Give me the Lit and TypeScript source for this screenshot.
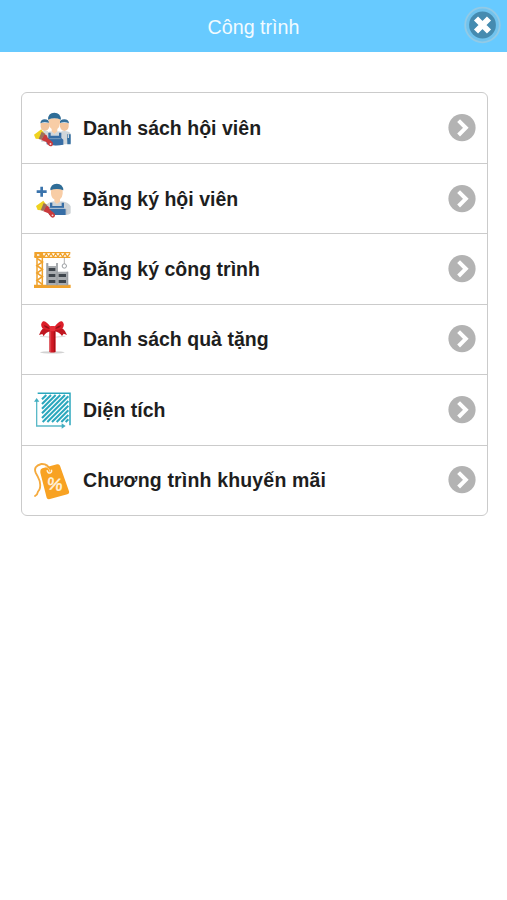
import { LitElement, html, svg, css, TemplateResult } from "lit";
import { customElement } from "lit/decorators.js";

interface MenuItem {
  label: string;
  spacing: string;
  icon: TemplateResult;
}

const brush = svg`
  <path d="M54 92 L62 97 L66 106 L77 115 Q84 121 79 128 Q73 133 67 126 L61 117 L46 111 Z" fill="#c93a3c"/>
  <circle cx="73.5" cy="123" r="2.8" fill="#f3dada"/>
  <path d="M24 95 L46 79 L54 90 L40 108 L29 107 Z" fill="#efd21f"/>
  <path d="M47 86 L58 92 L46 110 L38 108 Z" fill="#9c6f5c"/>`;

const plusMark = svg`<path d="M41 37V67M26 52H56" stroke="#3a73ac" stroke-width="8"/>`;

const members = svg`
  <path d="M38 57 V68 Q40 79 50 81 Q61 79 64 68 V57Z M96 57 V68 Q99 79 109 81 Q120 79 122 68 V57Z" fill="#f0c49d"/>
  <path d="M37 58 Q38 46 50 46 Q63 46 65 58 Q50 52 37 58Z M94 58 Q95 46 109 46 Q122 46 123 58 Q109 52 94 58Z" fill="#346f99"/>
  <path d="M36 84 Q46 78 60 81 V114 H40Z" fill="#d5dadd"/>
  <path d="M100 82 Q123 79 128 89 V116 Q120 123 103 120Z" fill="#d0d6da"/>
  <path d="M117 91 H128 V121 H118Z" fill="#346fa1"/>
  <path d="M121 91V102" stroke="#d8dee2" stroke-width="4"/>
  <path d="M62 43 V58 Q63 70 71 75 V84 L79 91 L88 84 V75 Q95 70 96 58 V43Z" fill="#f8cda6"/>
  <path d="M60 47 Q60 26 79 26 Q98 26 99 47 Q79 39 60 47Z" fill="#2f6d97"/>
  <path d="M56 89 Q61 82 70 82 L79 90 L89 82 Q104 82 107 90 V122 Q80 127 56 121Z" fill="#cfd6db"/>
  <path d="M61 86 H68 V95 H93 V86 H100 V102 L106 107 V122 Q80 127 56 121 V106 L61 102Z" fill="#376da5"/>
  <path d="M64 104 H98" stroke="#9db5cc" stroke-width="2"/>
  <g transform="translate(-6 -3)">${brush}</g>`;

const register = svg`
  ${plusMark}
  <path d="M69 44 V58 Q70 70 79 75 V84 L87 90 L96 84 V75 Q103 70 104 58 V44Z" fill="#f8cda6"/>
  <path d="M67 48 Q67 28 86.5 28 Q105 28 106 48 Q87 40 67 48Z" fill="#2f6d97"/>
  <path d="M54 91 Q62 83 77 81 L87 89 L98 81 Q121 83 128 96 V117 Q124 122 112 122 L64 122Z" fill="#cdd2d6"/>
  <path d="M66 85 H73 V95 H101 V85 H108 V100 L113 105 V122 H64 L57 107 V102 L66 99Z" fill="#376da5"/>
  <path d="M61 102 H111" stroke="#c4cfd9" stroke-width="3"/>
  <path d="M116 104V121" stroke="#b6b7bb" stroke-width="2"/>
  ${brush}`;

const crane = svg`
  <g fill="none" stroke="#f0a22c">
    <path d="M20 26H127M20 40H127" stroke-width="3.6"/>
    <path d="M20 39L27 28L34 39L41 28L48 39L55 28L62 39L69 28L76 39L83 28L90 39L97 28L104 39L111 28L118 39L126 28" stroke-width="4"/>
    <path d="M27 40V124M43 40V124" stroke-width="4.5"/>
    <path d="M27 43L43 54L27 65L43 76L27 87L43 98L27 109L43 121" stroke-width="5"/>
  </g>
  <path d="M19 25H45V41H19Z" fill="#f0a22c"/>
  <path d="M27 30H34V36H27Z" fill="#fae6c8"/>
  <path d="M18 122H128V132H18Z" fill="#f0a22c"/>
  <path d="M109 41V60" stroke="#8d8b8b" stroke-width="2"/>
  <circle cx="109" cy="66" r="6.5" fill="none" stroke="#9b9fa3" stroke-width="3"/>
  <path d="M55 57H61V66H84V57H90V83H121V124H55Z" fill="#a8acb0"/>
  <path d="M62 72H82V81H62Z M62 90H82V99H62Z M92 90H114V99H92Z M62 108H82V117H62Z M92 108H114V117H92Z" fill="#3e454c"/>
  <path d="M118 83V124M87 83V124M57 58V124" stroke="#8d9196" stroke-width="2"/>`;

const gift = svg`
  <ellipse cx="73" cy="116" rx="37" ry="3.5" fill="#d2d2d2"/>
  <path d="M36 68 Q73 74 112 68" fill="none" stroke="#dedada" stroke-width="3"/>
  <path d="M64 50H83V115Q73 118 64 115Z" fill="#d01822"/>
  <path d="M68 52V115" stroke="#e65b61" stroke-width="2"/>
  <path d="M79 52V115" stroke="#9d0f18" stroke-width="3"/>
  <path d="M68 40 Q42 36 33 64 L43 61 L47 68 Q53 55 70 52Z M79 40 Q107 36 117 64 L107 60 L102 67 Q95 55 77 52Z" fill="#c01620"/>
  <path d="M68 40 Q55 22 45 23 Q35 32 43 44 Q54 50 68 50Z M79 40 Q92 22 102 23 Q112 32 104 44 Q93 50 79 50Z" fill="#dc1e29"/>
  <path d="M65 43 Q54 34 48 35 Q49 43 65 46Z M82 43 Q93 34 99 35 Q98 43 82 46Z" fill="#981019"/>
  <rect x="65" y="37" width="17" height="16" rx="4" fill="#e62e38"/>`;

const area = svg`
  <path d="M29 22H126V118" fill="none" stroke="#2ba7bd" stroke-width="4.5"/>
  <path d="M42 40L55 27M42 54L69 27M42 68L83 27M42 82L97 27M42 96L111 27M44 108L121 31M58 108L121 45M72 108L121 59M86 108L121 73M100 108L121 87M113 108L121 100" stroke="#2ba7bd" stroke-width="6.2"/>
  <path d="M26 43V120H106" fill="none" stroke="#5bb9c8" stroke-width="4"/>
  <path d="M18 47L26 36L34 47Z M101 112L113 120L101 128Z" fill="#42aec0"/>`;

const tag = svg`
  <path d="M66 46 Q61 25 40 26 Q15 32 23 52 Q30 63 35 77 Q40 100 30 109 Q29 117 21 122" fill="none" stroke="#f5aa3e" stroke-width="5.5" stroke-linecap="round"/>
  <path d="M37 46 Q37 41 43 39 L87 27 Q93 26 96 31 L123 108 Q125 115 118 117 L66 131 Q59 133 56 127 L37 52Z" fill="#f8a223"/>
  <path d="M52 35 Q65 37 65 49" fill="none" stroke="#fbd59a" stroke-width="3"/>
  <path d="M57 45 Q60 55 66 53 Q73 51 70 43" fill="none" stroke="#fff1da" stroke-width="4.5"/>
  <text class="percent" x="0" y="19" transform="translate(81 85) rotate(8)" text-anchor="middle">%</text>`;

const items: MenuItem[] = [
  { label: "Danh sách hội viên", spacing: "0.02px", icon: html`<svg class="icon" viewBox="0 -3 150 150">${members}</svg>` },
  { label: "Đăng ký hội viên", spacing: "0.02px", icon: html`<svg class="icon" viewBox="0 -1 150 150">${register}</svg>` },
  { label: "Đăng ký công trình", spacing: "0.02px", icon: html`<svg class="icon" viewBox="0 0 150 150">${crane}</svg>` },
  { label: "Danh sách quà tặng", spacing: "0.02px", icon: html`<svg class="icon" viewBox="0 1 150 150">${gift}</svg>` },
  { label: "Diện tích", spacing: "0.02px", icon: html`<svg class="icon" viewBox="0 -3 150 150">${area}</svg>` },
  { label: "Chương trình khuyến mãi", spacing: "0.17px", icon: html`<svg class="icon" viewBox="0 -1 150 150">${tag}</svg>` },
];

@customElement("app-root")
export class AppRoot extends LitElement {
  static styles = css`
    :host {
      display: block;
      min-height: 900px;
      background: #fff;
      font-family: "Liberation Sans", Arial, sans-serif;
    }
    .header {
      display: grid;
      grid-template-columns: 44px 1fr 44px;
      align-items: center;
      height: 52px;
      background: #67caff;
    }
    .title {
      grid-column: 2;
      margin: 0;
      padding-top: 1px;
      color: #f2fbff;
      font-size: 19.7px;
      font-weight: 400;
      line-height: 24px;
      text-align: center;
    }
    .close {
      width: 38px;
      height: 38px;
      margin-bottom: 2px;
      padding: 0;
      border: 0;
      background: none;
    }
    .close svg { display: block; }
    .menu {
      box-sizing: border-box;
      width: 467px;
      height: 424.5px;
      margin: 39.5px 0 0 20.5px;
      padding: 0;
      list-style: none;
      display: grid;
      grid-template-rows: repeat(6, 1fr);
      border: 1px solid #cbcbcb;
      border-radius: 6px;
    }
    .row {
      display: flex;
      align-items: center;
      padding: 0 10.5px 0 6.5px;
      min-height: 0;
    }
    .row + .row { border-top: 1px solid #cbcbcb; }
    .icon { width: 50px; height: 50px; flex: none; }
    .label {
      flex: 1;
      margin-left: 5px;
      color: #1e1e1e;
      font-size: 19.5px;
      font-weight: 700;
      line-height: 24px;
      white-space: nowrap;
    }
    .chevron { width: 28px; height: 28px; flex: none; }
    .percent {
      font: 400 52px "Liberation Sans", Arial, sans-serif;
      fill: #fff3df;
      stroke: #fff3df;
      stroke-width: 1.5px;
    }
  `;

  render() {
    return html`
      <header class="header">
        <h1 class="title">Công trình</h1>
        <button class="close" aria-label="Đóng">
          <svg width="38" height="38" viewBox="0 0 38 38">
            <circle cx="19.5" cy="19" r="17.3" fill="#70c3ee" stroke="#92cae6" stroke-width="1.8" />
            <circle cx="19.5" cy="19" r="13.4" fill="#458bb0" />
            <path d="M13 12.5L26 25.5M26 12.5L13 25.5" stroke="#fff" stroke-width="5.8" />
          </svg>
        </button>
      </header>
      <ul class="menu">
        ${items.map(
          (item) => html`
            <li class="row">
              ${item.icon}
              <span class="label" style="letter-spacing:${item.spacing}">${item.label}</span>
              <svg class="chevron" viewBox="0 0 28 28">
                <circle cx="14" cy="13.7" r="13.6" fill="#b3b3b3" />
                <path d="M10.6 6.6L17.8 13.8L10.6 21" fill="none" stroke="#fff" stroke-width="4" />
              </svg>
            </li>
          `
        )}
      </ul>
    `;
  }
}
